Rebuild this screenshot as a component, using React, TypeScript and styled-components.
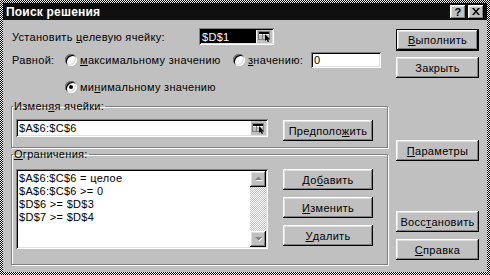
import React from 'react';
import styled, { createGlobalStyle, css } from 'styled-components';

const GlobalStyle = createGlobalStyle`
  html, body {
    margin: 0;
    padding: 0;
    background: #fff;
  }
  body {
    font-family: "Liberation Sans", Arial, sans-serif;
    font-size: 11px;
    letter-spacing: 0.3px;
    color: #000;
  }
  * {
    box-sizing: border-box;
  }
  u {
    text-underline-offset: 1px;
  }
`;

const raised = css`
  background: #c0c0c0;
  box-shadow: inset -1px -1px 0 #000, inset 1px 1px 0 #fff,
    inset -2px -2px 0 #808080, inset 2px 2px 0 #dfdfdf;
`;

const sunken = css`
  box-shadow: inset 1px 1px 0 #808080, inset -1px -1px 0 #fff,
    inset 2px 2px 0 #000, inset -2px -2px 0 #dfdfdf;
`;

const Frame = styled.div`
  width: 490px;
  height: 275px;
  padding: 3px;
  background: repeating-conic-gradient(#000 0 25%, #fff 0 50%) 0 0 / 2px 2px;
`;

const Window = styled.div`
  width: 100%;
  height: 100%;
  background: #c0c0c0;
  display: flex;
  flex-direction: column;
`;

const TitleBar = styled.div`
  height: 17px;
  background: #101010;
  display: flex;
  align-items: center;
  padding: 0 3px 0 3px;
  color: #fff;
  font-weight: bold;
  font-size: 12px;
  letter-spacing: 0.2px;
`;

const Title = styled.span`
  flex: 1;
`;

const CaptionButton = styled.div`
  ${raised};
  width: 16px;
  height: 14px;
  margin-left: 2px;
  display: flex;
  align-items: center;
  justify-content: center;
  color: #000;
  font-size: 11px;
  font-weight: bold;
`;

const Body = styled.div`
  flex: 1;
  display: flex;
  padding: 0 8px;
  gap: 8px;
`;

const LeftCol = styled.div`
  width: 377px;
  display: flex;
  flex-direction: column;
`;

const RightCol = styled.div`
  width: 83px;
  display: flex;
  flex-direction: column;
`;

const Row = styled.div<{ $mt: number; $h: number; $pl?: number }>`
  display: flex;
  align-items: center;
  margin-top: ${p => p.$mt}px;
  height: ${p => p.$h}px;
  padding-left: ${p => p.$pl ?? 1}px;
  white-space: nowrap;
`;

const Label = styled.span<{ $w?: number }>`
  width: ${p => (p.$w ? `${p.$w}px` : 'auto')};
  flex-shrink: 0;
`;

const RefField = styled.div<{ $w: number; $h: number }>`
  ${sunken};
  width: ${p => p.$w}px;
  height: ${p => p.$h}px;
  background: #fff;
  display: flex;
  padding: 2px;
`;

const FieldText = styled.div<{ $selected?: boolean }>`
  flex: 1;
  display: flex;
  align-items: center;
  padding-left: 1px;
  background: ${p => (p.$selected ? '#000' : '#fff')};
  color: ${p => (p.$selected ? '#fff' : '#000')};
`;

const RefButton = styled.div`
  width: 16px;
  background: #c0c0c0;
  display: flex;
  align-items: center;
  justify-content: center;
  border-left: 1px solid #fff;
`;

const TextField = styled.div<{ $w: number }>`
  ${sunken};
  width: ${p => p.$w}px;
  height: 16px;
  background: #fff;
  display: flex;
  align-items: center;
  padding-left: 3px;
`;

const Option = styled.label<{ $w?: number }>`
  display: flex;
  align-items: center;
  gap: 3px;
  width: ${p => (p.$w ? `${p.$w}px` : 'auto')};
  flex-shrink: 0;
`;

const Radio = styled.span<{ $checked?: boolean }>`
  width: 12px;
  height: 12px;
  border-radius: 50%;
  background: #fff;
  box-shadow: inset 1px 1px 0 #808080, inset -1px -1px 0 #fff,
    inset 2px 2px 0 #000, inset -2px -2px 0 #dfdfdf;
  display: flex;
  align-items: center;
  justify-content: center;
  &::after {
    content: '';
    width: 4px;
    height: 4px;
    border-radius: 50%;
    background: #000;
    display: ${p => (p.$checked ? 'block' : 'none')};
  }
`;

const Group = styled.fieldset<{ $mt: number }>`
  margin: ${p => p.$mt}px 0 0 0;
  padding: 0;
  border: 1px solid #808080;
  box-shadow: inset 1px 1px 0 #fff, 1px 1px 0 #fff;
`;

const Legend = styled.legend`
  padding: 0 1px;
  margin-left: 1px;
  line-height: 13px;
  height: 13px;
`;

const GroupContent = styled.div<{ $pt: number; $pb: number }>`
  display: flex;
  align-items: flex-start;
  gap: 15px;
  padding: ${p => p.$pt}px 0 ${p => p.$pb}px 4px;
`;

const Button = styled.div<{ $w?: number; $mt?: number; $default?: boolean }>`
  ${raised};
  width: ${p => (p.$w ? `${p.$w}px` : '100%')};
  height: ${p => (p.$default ? 22 : 21)}px;
  margin-top: ${p => p.$mt ?? 0}px;
  display: flex;
  align-items: center;
  justify-content: center;
  flex-shrink: 0;
  white-space: nowrap;
  ${p =>
    p.$default &&
    css`
      border: 1px solid #000;
    `}
`;

const ButtonStack = styled.div`
  display: flex;
  flex-direction: column;
  gap: 7px;
`;

const ListBox = styled.div`
  ${sunken};
  width: 252px;
  height: 80px;
  background: #fff;
  display: flex;
  padding: 2px;
`;

const ListItems = styled.div`
  flex: 1;
  padding: 1px 0 0 1px;
  line-height: 13px;
  white-space: nowrap;
`;

const ScrollBar = styled.div`
  width: 16px;
  display: flex;
  flex-direction: column;
`;

const ScrollArrow = styled.div`
  ${raised};
  height: 16px;
  display: flex;
  align-items: center;
  justify-content: center;
`;

const ScrollTrack = styled.div`
  flex: 1;
  background: repeating-conic-gradient(#fff 0 25%, #c0c0c0 0 50%) 0 0 / 2px 2px;
`;

const RefIcon = () => (
  <svg width="14" height="11" viewBox="0 0 14 11">
    <rect x="0.5" y="0.5" width="11" height="8" fill="#fff" stroke="#808080" />
    <rect x="1" y="1" width="10" height="2" fill="#000" />
    <line x1="1" y1="5" x2="11" y2="5" stroke="#808080" />
    <line x1="1" y1="7" x2="11" y2="7" stroke="#808080" />
    <line x1="4.5" y1="3" x2="4.5" y2="9" stroke="#808080" />
    <path d="M7 3 L7 10 L8.6 8.6 L9.8 11 L11 10.4 L9.9 8.2 L12 8.2 Z" fill="#000" />
  </svg>
);

const Arrow = ({ down }: { down?: boolean }) => (
  <svg width="9" height="6" viewBox="0 0 9 6">
    {down ? (
      <>
        <path d="M2 2 L9 2 L5.5 5.5 Z" fill="#fff" />
        <path d="M1 1 L8 1 L4.5 4.5 Z" fill="#808080" />
      </>
    ) : (
      <>
        <path d="M5.5 1.5 L9 5 L2 5 Z" fill="#fff" />
        <path d="M4.5 0.5 L8 4 L1 4 Z" fill="#808080" />
      </>
    )}
  </svg>
);

const CloseGlyph = () => (
  <svg width="8" height="7" viewBox="0 0 8 7">
    <path d="M0 0h2l2 2.5L6 0h2L5 3.5 8 7H6L4 4.5 2 7H0l3-3.5Z" fill="#000" />
  </svg>
);

const constraints = [
  '$A$6:$C$6 = целое',
  '$A$6:$C$6 >= 0',
  '$D$6 >= $D$3',
  '$D$7 >= $D$4',
];

const App = () => {
  return (
    <>
      <GlobalStyle />
      <Frame>
        <Window>
          <TitleBar>
            <Title>Поиск решения</Title>
            <CaptionButton>?</CaptionButton>
            <CaptionButton>
              <CloseGlyph />
            </CaptionButton>
          </TitleBar>
          <Body>
            <LeftCol>
              <Row $mt={8} $h={17}>
                <Label $w={187}>
                  Установить <u>ц</u>елевую ячейку:
                </Label>
                <RefField $w={75} $h={17}>
                  <FieldText $selected>$D$1</FieldText>
                  <RefButton>
                    <RefIcon />
                  </RefButton>
                </RefField>
              </Row>
              <Row $mt={6} $h={17}>
                <Label $w={53}>Равной:</Label>
                <Option $w={168}>
                  <Radio />
                  <span>
                    <u>м</u>аксимальному значению
                  </span>
                </Option>
                <Option $w={78}>
                  <Radio />
                  <span>
                    <u>з</u>начению:
                  </span>
                </Option>
                <TextField $w={70}>0</TextField>
              </Row>
              <Row $mt={11} $h={16} $pl={54}>
                <Option>
                  <Radio $checked />
                  <span>
                    ми<u>н</u>имальному значению
                  </span>
                </Option>
              </Row>
              <Group $mt={5}>
                <Legend>
                  Измен<u>я</u>я ячейки:
                </Legend>
                <GroupContent $pt={6} $pb={6}>
                  <RefField $w={252} $h={18}>
                    <FieldText>$A$6:$C$6</FieldText>
                    <RefButton>
                      <RefIcon />
                    </RefButton>
                  </RefField>
                  <Button $w={90} $mt={1}>
                    Предполо<u>ж</u>ить
                  </Button>
                </GroupContent>
              </Group>
              <Group $mt={0}>
                <Legend>
                  <u>О</u>граничения:
                </Legend>
                <GroupContent $pt={8} $pb={15}>
                  <ListBox>
                    <ListItems>
                      {constraints.map(c => (
                        <div key={c}>{c}</div>
                      ))}
                    </ListItems>
                    <ScrollBar>
                      <ScrollArrow>
                        <Arrow />
                      </ScrollArrow>
                      <ScrollTrack />
                      <ScrollArrow>
                        <Arrow down />
                      </ScrollArrow>
                    </ScrollBar>
                  </ListBox>
                  <ButtonStack>
                    <Button $w={90}>
                      До<u>б</u>авить
                    </Button>
                    <Button $w={90}>
                      <u>И</u>зменить
                    </Button>
                    <Button $w={90}>
                      <u>У</u>далить
                    </Button>
                  </ButtonStack>
                </GroupContent>
              </Group>
            </LeftCol>
            <RightCol>
              <Button $mt={9} $default>
                <u>В</u>ыполнить
              </Button>
              <Button $mt={6}>Закрыть</Button>
              <Button $mt={62}>
                <u>П</u>араметры
              </Button>
              <Button $mt={50}>
                Восс<u>т</u>ановить
              </Button>
              <Button $mt={7}>
                <u>С</u>правка
              </Button>
            </RightCol>
          </Body>
        </Window>
      </Frame>
    </>
  );
};

export default App;
